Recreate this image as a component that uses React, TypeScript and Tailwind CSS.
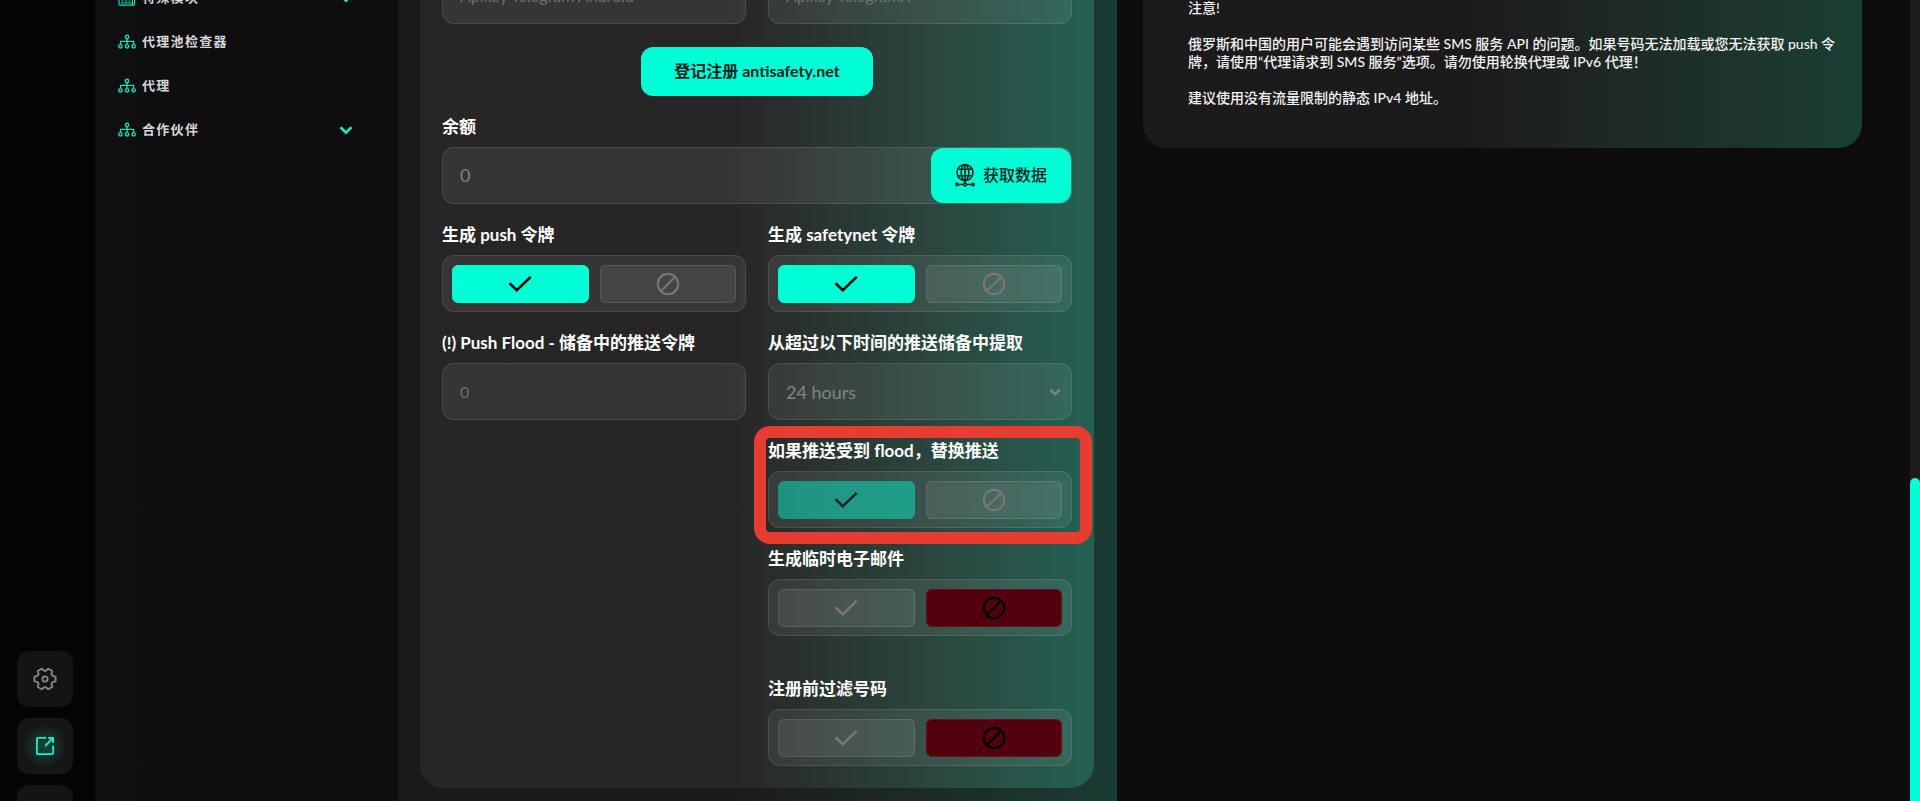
import type { ReactNode } from "react";

function SitemapIcon() {
  return (
    <svg width="18" height="16" viewBox="0 0 18 16" fill="none" stroke="#1fd9b4" strokeWidth="1.4">
      <circle cx="9" cy="3" r="1.7" />
      <path d="M9 5v5M2.6 10V7.4h13V10" />
      <circle cx="2.4" cy="12.3" r="1.7" />
      <circle cx="9" cy="12.3" r="1.7" />
      <circle cx="15.6" cy="12.3" r="1.7" />
    </svg>
  );
}

function CalendarIcon() {
  return (
    <svg width="18" height="16" viewBox="0 0 18 16" fill="none" stroke="#1fd9b4" strokeWidth="1.2">
      <rect x="1" y="1.5" width="15.6" height="13.6" rx="1" />
      <path d="M1 5.5h15.6M3.5 8.5h2M7 8.5h2M10.5 8.5h2M3.5 11h2M7 11h2M10.5 11h2M3 13h11M14.5 6v9" />
    </svg>
  );
}

function Chevron({ size, color }: { size: number; color: string }) {
  return (
    <svg width={size} height={size} viewBox="0 0 14 14" fill="none" stroke={color} strokeWidth="2.6">
      <path d="M1.5 4.200 7 9.600l5.500-5.400" />
    </svg>
  );
}

function CheckIcon() {
  return (
    <svg width="24" height="24" viewBox="0 0 24 24" fill="none" stroke="currentColor" strokeWidth="2.6">
      <path d="M1.500 11.200 8.800 18.300 22.700 4.900" />
    </svg>
  );
}

function BanIcon() {
  return (
    <svg width="24" height="24" viewBox="0 0 24 24" fill="none" stroke="currentColor" strokeWidth="2.200">
      <circle cx="12" cy="12" r="10.200" />
      <path d="M4.800 19.200 19.200 4.800" />
    </svg>
  );
}

function GlobeIcon() {
  return (
    <svg width="20" height="24" viewBox="0 0 20 24" fill="none" stroke="#06231e" strokeWidth="1.500">
      <circle cx="10" cy="9.500" r="8" />
      <ellipse cx="10" cy="9.500" rx="3.800" ry="8" />
      <path d="M10 1.500V20M2.800 6.200h14.400M2.800 12.800h14.400M3.200 21.500h5.300M11.500 21.500h5.300" />
      <circle cx="1.900" cy="21.500" r="1.200" />
      <circle cx="10" cy="21.500" r="1.400" />
      <circle cx="18.100" cy="21.500" r="1.200" />
    </svg>
  );
}

function GearIcon() {
  return (
    <svg width="24" height="24" viewBox="0 0 24 24" fill="none" stroke="#858585" strokeWidth="1.900" strokeLinejoin="round">
      <path d="M22.600 9.800V14.200L19.300 15.300 18.500 16.700 19.200 20 15.300 22.300 12.800 20.200h-1.600L8.700 22.300 4.800 20 5.500 16.700 4.700 15.300 1.400 14.200V9.800L4.700 8.700 5.500 7.300 4.800 4 8.700 1.700 11.200 3.800h1.600L15.300 1.700 19.200 4 18.500 7.300 19.300 8.700z" />
      <circle cx="12" cy="12" r="2.600" />
    </svg>
  );
}

function ExternalIcon() {
  return (
    <svg width="20" height="20" viewBox="0 0 20 20" fill="none" stroke="#12f2c8" strokeWidth="1.800">
      <path d="M11 1.900H2.800a.9.900 0 0 0-.9.900v14.400c0 .5.4.900.9.900h14.400c.5 0 .9-.4.900-.9V9.500" />
      <path d="M13 1.900h5.100V7M18 2l-7.800 8" />
    </svg>
  );
}

const navItems = [
  { text: "特殊模块", calendar: true, open: true },
  { text: "代理池检查器", calendar: false, open: false },
  { text: "代理", calendar: false, open: false },
  { text: "合作伙伴", calendar: false, open: true },
];

const labelClass = "mb-2 block pt-[19px] text-[17px] leading-6 font-bold whitespace-nowrap text-white";
const boxClass = "h-[57px] w-full rounded-xl border border-white/10 bg-white/[0.07]";

function Toggle({
  id,
  label,
  value,
  dim = false,
  children,
}: {
  id: string;
  label: string;
  value: boolean;
  dim?: boolean;
  children?: ReactNode;
}) {
  const base = "flex h-[38px] flex-1 items-center justify-center rounded-md border";
  const off = "border-white/10 bg-white/[0.08] text-[#777575]";
  const yes = value ? "border-[#00ffd5] bg-[#00ffd5] text-black" : off;
  const no = value ? off : "border-[#6b0d1c] bg-[#52000e] text-black";
  return (
    <div className="relative" role="group" aria-labelledby={id}>
      <span id={id} className={labelClass}>
        {label}
      </span>
      <div className={`${boxClass} flex items-center gap-[11px] px-[9px]`}>
        <button type="button" aria-pressed={value} aria-label="开启" className={`${base} ${yes} ${dim ? "opacity-45" : ""}`}>
          <CheckIcon />
        </button>
        <button type="button" aria-pressed={!value} aria-label="关闭" className={`${base} ${no}`}>
          <BanIcon />
        </button>
      </div>
      {children}
    </div>
  );
}

export default function App() {
  return (
    <div className="flex h-screen overflow-hidden bg-[#0e0c0d] font-[Lato,'Noto_Sans_CJK_SC',sans-serif] text-white">
      <aside className="flex w-[95px] shrink-0 flex-col items-start justify-end gap-[11px] bg-[#040404] pl-[17px]">
        <button type="button" aria-label="设置" className="flex size-14 shrink-0 items-center justify-center rounded-xl bg-[#141414]">
          <GearIcon />
        </button>
        <button
          type="button"
          aria-label="打开"
          className="flex size-14 shrink-0 items-center justify-center rounded-xl bg-[#151716] bg-radial from-[#0f4a3c] to-[#151716] to-55%"
        >
          <ExternalIcon />
        </button>
        <button type="button" aria-label="更多" className="-mb-10 size-14 shrink-0 rounded-xl bg-[#141414]" />
      </aside>

      <nav className="w-[303px] shrink-0 bg-linear-to-r from-[#0e1010] to-[#0f0d0f] to-40%">
        <ul className="-mt-6">
          {navItems.map((item) => (
            <li key={item.text}>
              <a href="#" className="flex h-11 items-center pr-[45px] pl-[23px] text-[13px] font-bold tracking-widest text-[#d6d6d6]">
                {item.calendar ? <CalendarIcon /> : <SitemapIcon />}
                <span className="ml-1.5 flex-1">{item.text}</span>
                {item.open && <Chevron size={14} color="#16e8c0" />}
              </a>
            </li>
          ))}
        </ul>
      </nav>

      <main className="grid min-w-0 flex-1 grid-cols-2 gap-[26px] pr-12">
        <section className="h-screen overflow-hidden bg-linear-to-r from-[#1b1a1a] from-45% to-[#1a3c34] pr-[23px] pl-[22px]">
          <form className="-mt-[60px] rounded-b-3xl bg-linear-to-r from-[#272525] from-45% to-[#236153] px-[22px] pt-[27px] pb-[22px]">
            <div className="grid grid-cols-2 gap-[22px]">
              <input
                aria-label="Apikey Telegram Android"
                placeholder="Apikey Telegram Android"
                className={`${boxClass} px-[17px] text-base placeholder:text-[#706f6f]`}
              />
              <input
                aria-label="Apikey TelegramX"
                placeholder="Apikey TelegramX"
                className={`${boxClass} px-[17px] text-base placeholder:text-[#6d7272]`}
              />
            </div>

            <div className="mt-[23px] flex justify-center">
              <button type="button" className="h-[49px] rounded-xl bg-[#00ffd5] px-[33px] pb-0.5 text-base font-bold whitespace-nowrap text-[#04211c]">
                登记注册 antisafety.net
              </button>
            </div>

            <label htmlFor="balance" className={labelClass}>
              余额
            </label>
            <div className={`${boxClass} flex items-center`}>
              <input id="balance" placeholder="0" className="h-full min-w-0 flex-1 bg-transparent px-[17px] pb-0.5 text-lg placeholder:text-[#838181]" />
              <button
                type="button"
                className="flex h-full w-[140px] items-center justify-center gap-2 rounded-xl bg-[#00ffd5] pb-0.5 text-base font-medium text-[#04211c]"
              >
                <GlobeIcon />
                获取数据
              </button>
            </div>

            <div className="grid grid-cols-2 gap-x-[22px]">
              <div>
                <Toggle id="push" label="生成 push 令牌" value />
                <label htmlFor="flood" className={labelClass}>
                  (!) Push Flood - 储备中的推送令牌
                </label>
                <input id="flood" placeholder="0" className={`${boxClass} px-[17px] text-base placeholder:text-[#6f6d6d]`} />
              </div>
              <div>
                <Toggle id="safetynet" label="生成 safetynet 令牌" value />
                <label htmlFor="reserve" className={labelClass}>
                  从超过以下时间的推送储备中提取
                </label>
                <div className="relative">
                  <select id="reserve" className={`${boxClass} appearance-none px-[17px] text-lg text-[#7f8785]`}>
                    <option>24 hours</option>
                  </select>
                  <span className="pointer-events-none absolute top-0 right-[11px] flex h-full items-center">
                    <Chevron size={12} color="#7f8785" />
                  </span>
                </div>
                <Toggle id="replace" label="如果推送受到 flood，替换推送" value dim>
                  <div className="pointer-events-none absolute top-1.5 -right-5 -bottom-4 -left-3.5 z-10 rounded-2xl border-12 border-[#e63c32]" />
                </Toggle>
                <Toggle id="email" label="生成临时电子邮件" value={false} />
                <div className="mt-[22px]">
                  <Toggle id="filter" label="注册前过滤号码" value={false} />
                </div>
              </div>
            </div>
          </form>
        </section>

        <section className="h-[148px] rounded-b-3xl bg-linear-to-r from-[#1c1b1b] from-45% to-[#1a3f34] pr-5 pl-[45px]">
          <div className="-mt-px space-y-[18px] text-sm leading-[18px] font-medium text-[#f2f2f2]">
            <p>注意!</p>
            <p>
              俄罗斯和中国的用户可能会遇到访问某些 SMS 服务 API 的问题。如果号码无法加载或您无法获取 push 令牌，请使用“代理请求到 SMS
              服务”选项。请勿使用轮换代理或 IPv6 代理！
            </p>
            <p>建议使用没有流量限制的静态 IPv4 地址。</p>
          </div>
        </section>
      </main>

      <div className="flex w-2.5 shrink-0 flex-col justify-end bg-[#1c1c1c]">
        <div className="h-[323px] rounded-t-full bg-[#00ffd5]" />
      </div>
    </div>
  );
}
